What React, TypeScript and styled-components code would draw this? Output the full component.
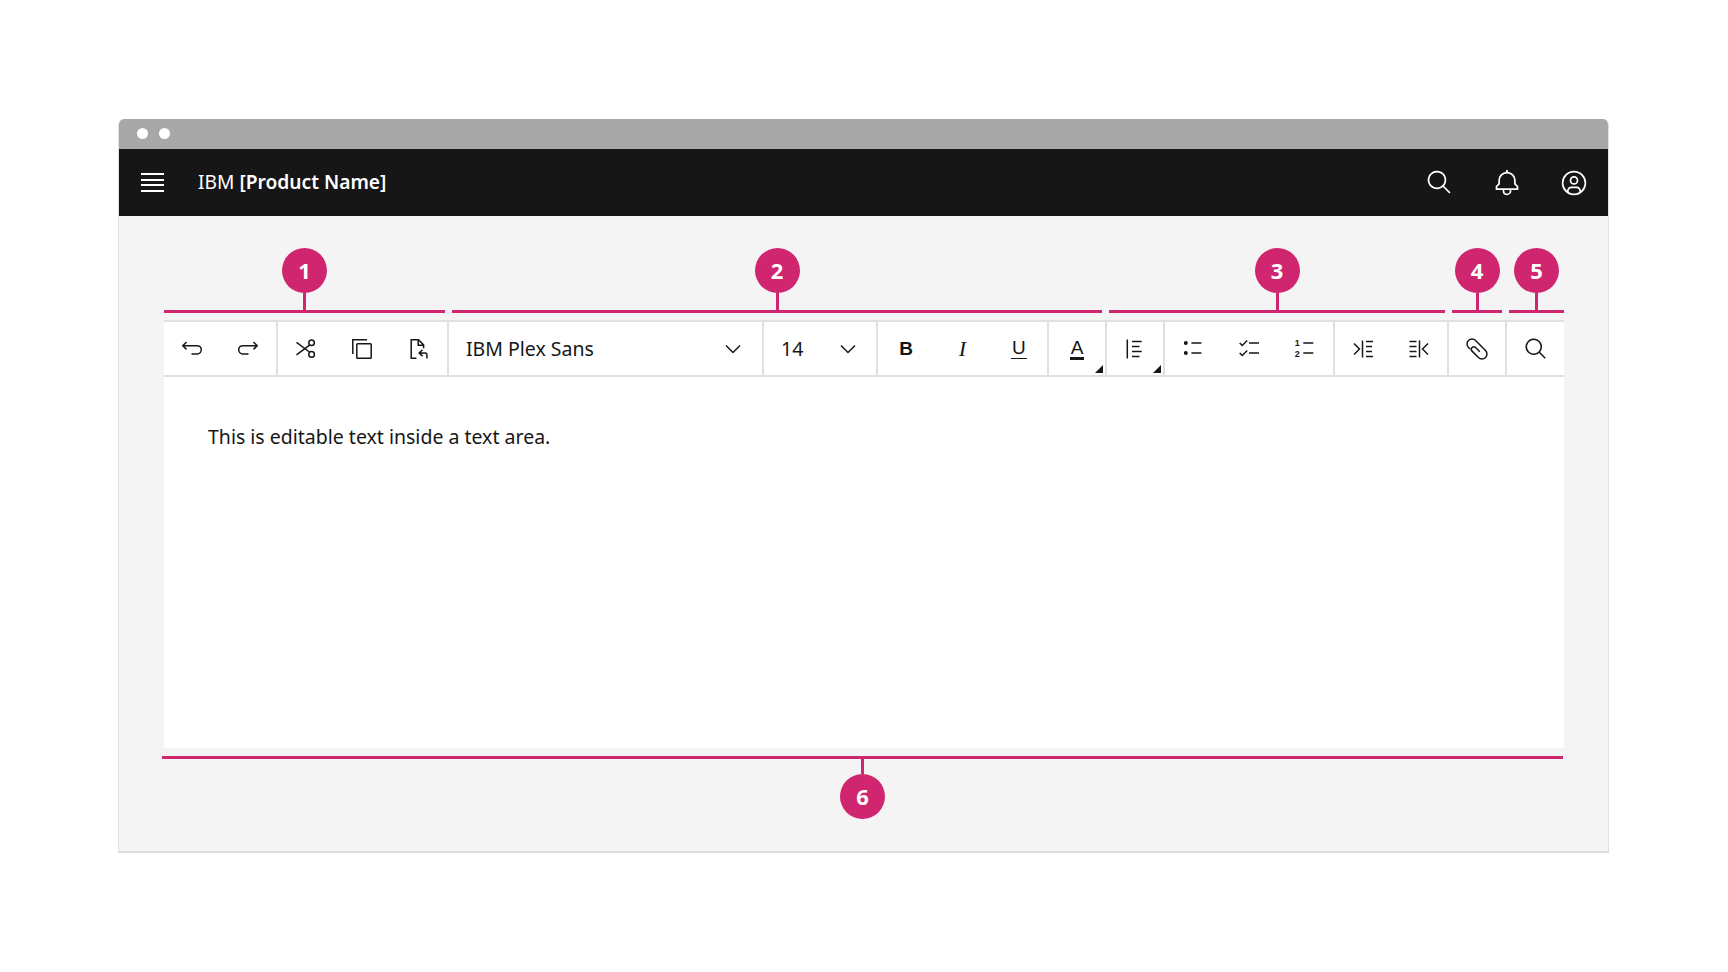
import React from 'react';
import styled, { createGlobalStyle } from 'styled-components';

const GlobalStyle = createGlobalStyle`
    html, body {
        margin: 0;
        background: #ffffff;
    }

    * {
        box-sizing: border-box;
    }
`;

const FONT = `'Noto Sans', 'Open Sans', Arial, sans-serif`;
const PINK = '#d02670';
const INK = '#161616';
const RULE = '#e0e0e0';

const Page = styled.div`
    width: 1728px;
    height: 972px;
    padding: 119px 119px 119px 118px;
    font-family: ${FONT};
    color: ${INK};
`;

const Frame = styled.div`
    display: flex;
    flex-direction: column;
    height: 734px;
    border-radius: 6px 6px 0 0;
    overflow: hidden;
    background: #f4f4f4;
    border-right: 1px solid #e0e0e0;
    border-left: 1px solid #e0e0e0;
    border-bottom: 2px solid #dcdcdc;
`;

const TitleBar = styled.div`
    display: flex;
    align-items: center;
    gap: 11px;
    height: 30px;
    flex: none;
    padding: 0 0 1px 18px;
    background: #a8a8a8;
`;

const Dot = styled.span`
    width: 11px;
    height: 11px;
    border-radius: 50%;
    background: #ffffff;
`;

const Header = styled.header`
    display: flex;
    align-items: center;
    height: 67px;
    flex: none;
    padding-left: 22px;
    background: ${INK};
    color: #ffffff;
`;

const Menu = styled.div`
    display: flex;
    flex-direction: column;
    gap: 3.4px;
    width: 23px;
    margin-right: 34px;

    span {
        height: 2px;
        background: #ffffff;
    }
`;

const Brand = styled.div`
    flex: 1;
    padding-bottom: 2px;
    font-size: 19.2px;

    b {
        font-weight: 600;
    }
`;

const HeaderActions = styled.div`
    display: flex;
    align-items: center;
`;

const HeaderAction = styled.div`
    display: flex;
    align-items: center;
    justify-content: center;
    width: 67.5px;
`;

const Content = styled.main`
    display: flex;
    flex-direction: column;
    flex: 1;
    padding: 32px 44px 0 45px;
`;

const CalloutRow = styled.div`
    display: flex;
    gap: 7px;
    margin-bottom: 7px;
`;

const Callout = styled.div<{ $width: number; $flip?: boolean }>`
    display: flex;
    flex-direction: ${(props) => (props.$flip ? 'column-reverse' : 'column')};
    align-items: center;
    flex: none;
    width: ${(props) => props.$width}px;
`;

const Bubble = styled.div`
    display: flex;
    align-items: center;
    justify-content: center;
    width: 45px;
    height: 45px;
    padding-bottom: 2px;
    border-radius: 50%;
    background: ${PINK};
    color: #ffffff;
    font-size: 22px;
    font-weight: 700;
`;

const Stem = styled.div<{ $height: number }>`
    width: 3px;
    height: ${(props) => props.$height}px;
    background: ${PINK};
`;

const Bar = styled.div`
    align-self: stretch;
    height: 3px;
    background: ${PINK};
`;

const Toolbar = styled.div`
    display: flex;
    height: 57px;
    flex: none;
    background: #ffffff;
    border-top: 2px solid ${RULE};
    border-bottom: 2px solid ${RULE};
`;

const Group = styled.div<{ $width: number }>`
    display: flex;
    flex: none;
    width: ${(props) => props.$width}px;
    border-right: 2px solid ${RULE};

    &:last-child {
        border-right: 0;
    }
`;

const ToolButton = styled.div`
    position: relative;
    display: flex;
    align-items: center;
    justify-content: center;
    flex: 1;
`;

const Corner = styled.span`
    position: absolute;
    right: 2px;
    bottom: 2px;
    width: 8px;
    height: 8px;
    background: ${INK};
    clip-path: polygon(100% 0, 100% 100%, 0 100%);
`;

const Select = styled.div<{ $left: number; $right: number }>`
    display: flex;
    align-items: center;
    justify-content: space-between;
    flex: 1;
    padding: 0 ${(props) => props.$right}px 0 ${(props) => props.$left}px;
    font-size: 19.5px;
`;

const BoldGlyph = styled.span`
    font-family: 'Liberation Sans', Arial, sans-serif;
    font-size: 19px;
    font-weight: 700;
`;

const ItalicGlyph = styled.span`
    font-family: 'Liberation Serif', 'Times New Roman', serif;
    font-size: 22px;
    font-style: italic;
`;

const UnderGlyph = styled.span`
    padding: 0 1px 1px;
    line-height: 19px;
    font-family: 'Liberation Sans', Arial, sans-serif;
    font-size: 19px;
    border-bottom: 1.5px solid ${INK};
`;

const ColorGlyph = styled.span`
    padding: 0 1px;
    line-height: 19px;
    font-family: 'Liberation Sans', Arial, sans-serif;
    font-size: 19px;
    border-bottom: 3px solid ${INK};
`;

const TextArea = styled.div`
    height: 371px;
    flex: none;
    padding: 46px 44px;
    background: #ffffff;
    font-size: 19.5px;
    line-height: 28px;
`;

const BottomCallout = styled(Callout)`
    margin: 8px 0 0 -2px;
`;

const DigitMark = styled.text`
    font-family: 'Liberation Sans', Arial, sans-serif;
    font-size: 9px;
    font-weight: 700;
    fill: ${INK};
    stroke: none;
`;

const Svg: React.FC<{ size?: number; children: React.ReactNode }> = ({ size = 24, children }) => (
    <svg
        width={size}
        height={size}
        viewBox="0 0 24 24"
        fill="none"
        stroke={INK}
        strokeWidth={1.5}
    >
        {children}
    </svg>
);

const Carbon: React.FC<{ size: number; fill?: string; d: string[] }> = ({ size, fill = INK, d }) => (
    <svg width={size} height={size} viewBox="0 0 32 32" fill={fill}>
        {d.map((path) => (
            <path key={path} d={path} />
        ))}
    </svg>
);

const SEARCH = ['M29,27.5859l-7.5521-7.5521a11.0177,11.0177,0,1,0-1.4141,1.4141L27.5859,29ZM4,13a9,9,0,1,1,9,9A9.01,9.01,0,0,1,4,13Z'];
const BELL = ['M28.7071,19.293,26,16.5859V13a10.0136,10.0136,0,0,0-9-9.9492V1H15V3.0508A10.0136,10.0136,0,0,0,6,13v3.5859L3.2929,19.293A1,1,0,0,0,3,20v3a1,1,0,0,0,1,1h7v.7768a5.152,5.152,0,0,0,4.5,5.1987A5.0057,5.0057,0,0,0,21,25V24h7a1,1,0,0,0,1-1V20A1,1,0,0,0,28.7071,19.293ZM19,25a3,3,0,0,1-6,0V24h6Zm8-3H5V20.4141L7.707,17.707A1,1,0,0,0,8,17V13a8,8,0,0,1,16,0v4a1,1,0,0,0,.293.707L27,20.4141Z'];
const AVATAR = [
    'M16,8a5,5,0,1,0,5,5A5,5,0,0,0,16,8Zm0,8a3,3,0,1,1,3-3A3.0034,3.0034,0,0,1,16,16Z',
    'M16,2A14,14,0,1,0,30,16,14.0158,14.0158,0,0,0,16,2ZM10,26.3765V25a3.0033,3.0033,0,0,1,3-3h6a3.0033,3.0033,0,0,1,3,3v1.3765a11.8989,11.8989,0,0,1-12,0Zm13.9925-1.4507A5.0016,5.0016,0,0,0,19,20H13a5.0016,5.0016,0,0,0-4.9925,4.9258,12,12,0,1,1,15.985,0Z',
];

const Chevron = () => (
    <Svg>
        <path d="M5 8.5l7 7 7-7" />
    </Svg>
);

const Undo = () => (
    <Svg>
        <path d="M6.5 5L2.8 8.7l3.7 3.7M2.8 8.7h14.4a4.1 4.1 0 0 1 0 8.2H11.5" />
    </Svg>
);

const Redo = () => (
    <Svg>
        <path d="M17.5 5l3.7 3.7-3.7 3.7M21.2 8.7H6.8a4.1 4.1 0 0 0 0 8.2h5.7" />
    </Svg>
);

const Cut = () => (
    <Svg>
        <circle cx="17.6" cy="5.8" r="2.8" />
        <circle cx="17.6" cy="17.4" r="2.8" />
        <path d="M2.5 5.4l13 9.6M2.5 17.8l13-9.6" />
    </Svg>
);

const Copy = () => (
    <Svg>
        <rect x="6.8" y="6.8" width="14.4" height="14.4" rx="0.8" />
        <path d="M2.8 17V2.8H17" />
    </Svg>
);

const Paste = () => (
    <Svg>
        <path d="M9.5 21.2H4.2V2.8h7.3l5.1 5.1v3.4M11.2 2.8v5.4h5.4" />
        <path d="M15.5 12.7l-3.3 3.2 3.3 3.2M12.2 15.9h5.9a1.8 1.8 0 0 1 1.8 1.8v3.8" />
    </Svg>
);

const Rows: React.FC<{ x1: number; rows: number[] }> = ({ x1, rows }) => (
    <>
        {rows.map((x2, i) => (
            <path key={i} d={`M${x1} ${4.5 + i * 5}H${x2}`} />
        ))}
    </>
);

const Align = () => (
    <Svg>
        <path d="M4.3 2.5v19" />
        <Rows x1={9} rows={[18.7, 16.5, 18.7, 16.5]} />
    </Svg>
);

const Bullets = () => (
    <Svg>
        <circle cx="4.8" cy="6" r="2" fill={INK} stroke="none" />
        <circle cx="4.8" cy="16" r="2" fill={INK} stroke="none" />
        <path d="M10.4 6h10M10.4 16h10" />
    </Svg>
);

const Checks = () => (
    <Svg>
        <path d="M2.7 6l2.5 2.5 5-5M2.7 16l2.5 2.5 5-5M12 6h10M12 16h10" />
    </Svg>
);

const Numbers = () => (
    <Svg>
        <DigitMark x="4.3" y="9.4" textAnchor="middle">1</DigitMark>
        <DigitMark x="4.3" y="19.8" textAnchor="middle">2</DigitMark>
        <path d="M10.3 6h10M10.3 16h10" />
    </Svg>
);

const Indent = () => (
    <Svg>
        <path d="M3 6.5L8.5 12 3 17.5M11.5 3.5v17" />
        <Rows x1={15} rows={[22, 21, 21, 22]} />
    </Svg>
);

const Outdent = () => (
    <Svg>
        <path d="M21 6.5L15.5 12l5.5 5.5M12.5 3.5v17" />
        <Rows x1={2.5} rows={[9.5, 9.5, 9.5, 9.5]} />
    </Svg>
);

const Clip = () => (
    <Svg>
        <g transform="rotate(45 12 12)">
            <path d="M7 17H5a5 5 0 0 1 0-10h14a5 5 0 0 1 0 10H10a2.5 2.5 0 0 1 0-5h6" />
        </g>
    </Svg>
);

const App: React.FC = () => {
    return (
        <Page>
            <GlobalStyle />
            <Frame>
                <TitleBar>
                    <Dot />
                    <Dot />
                </TitleBar>
                <Header>
                    <Menu>
                        <span />
                        <span />
                        <span />
                        <span />
                    </Menu>
                    <Brand>
                        IBM <b>[Product Name]</b>
                    </Brand>
                    <HeaderActions>
                        <HeaderAction>
                            <Carbon size={27} fill="#ffffff" d={SEARCH} />
                        </HeaderAction>
                        <HeaderAction>
                            <Carbon size={28} fill="#ffffff" d={BELL} />
                        </HeaderAction>
                        <HeaderAction>
                            <Carbon size={28} fill="#ffffff" d={AVATAR} />
                        </HeaderAction>
                    </HeaderActions>
                </Header>
                <Content>
                    <CalloutRow>
                        <Callout $width={281}>
                            <Bubble>1</Bubble>
                            <Stem $height={17} />
                            <Bar />
                        </Callout>
                        <Callout $width={650}>
                            <Bubble>2</Bubble>
                            <Stem $height={17} />
                            <Bar />
                        </Callout>
                        <Callout $width={336}>
                            <Bubble>3</Bubble>
                            <Stem $height={17} />
                            <Bar />
                        </Callout>
                        <Callout $width={50}>
                            <Bubble>4</Bubble>
                            <Stem $height={17} />
                            <Bar />
                        </Callout>
                        <Callout $width={55}>
                            <Bubble>5</Bubble>
                            <Stem $height={17} />
                            <Bar />
                        </Callout>
                    </CalloutRow>
                    <Toolbar>
                        <Group $width={114}>
                            <ToolButton><Undo /></ToolButton>
                            <ToolButton><Redo /></ToolButton>
                        </Group>
                        <Group $width={171}>
                            <ToolButton><Cut /></ToolButton>
                            <ToolButton><Copy /></ToolButton>
                            <ToolButton><Paste /></ToolButton>
                        </Group>
                        <Group $width={315}>
                            <Select $left={17} $right={17}>
                                IBM Plex Sans
                                <Chevron />
                            </Select>
                        </Group>
                        <Group $width={114}>
                            <Select $left={17} $right={16}>
                                14
                                <Chevron />
                            </Select>
                        </Group>
                        <Group $width={171}>
                            <ToolButton><BoldGlyph>B</BoldGlyph></ToolButton>
                            <ToolButton><ItalicGlyph>I</ItalicGlyph></ToolButton>
                            <ToolButton><UnderGlyph>U</UnderGlyph></ToolButton>
                        </Group>
                        <Group $width={58}>
                            <ToolButton>
                                <ColorGlyph>A</ColorGlyph>
                                <Corner />
                            </ToolButton>
                        </Group>
                        <Group $width={58}>
                            <ToolButton>
                                <Align />
                                <Corner />
                            </ToolButton>
                        </Group>
                        <Group $width={170}>
                            <ToolButton><Bullets /></ToolButton>
                            <ToolButton><Checks /></ToolButton>
                            <ToolButton><Numbers /></ToolButton>
                        </Group>
                        <Group $width={114}>
                            <ToolButton><Indent /></ToolButton>
                            <ToolButton><Outdent /></ToolButton>
                        </Group>
                        <Group $width={58}>
                            <ToolButton><Clip /></ToolButton>
                        </Group>
                        <Group $width={57}>
                            <ToolButton>
                                <Carbon size={24} d={SEARCH} />
                            </ToolButton>
                        </Group>
                    </Toolbar>
                    <TextArea>This is editable text inside a text area.</TextArea>
                    <BottomCallout $width={1401} $flip>
                        <Bubble>6</Bubble>
                        <Stem $height={15} />
                        <Bar />
                    </BottomCallout>
                </Content>
            </Frame>
        </Page>
    );
};

export default App;
